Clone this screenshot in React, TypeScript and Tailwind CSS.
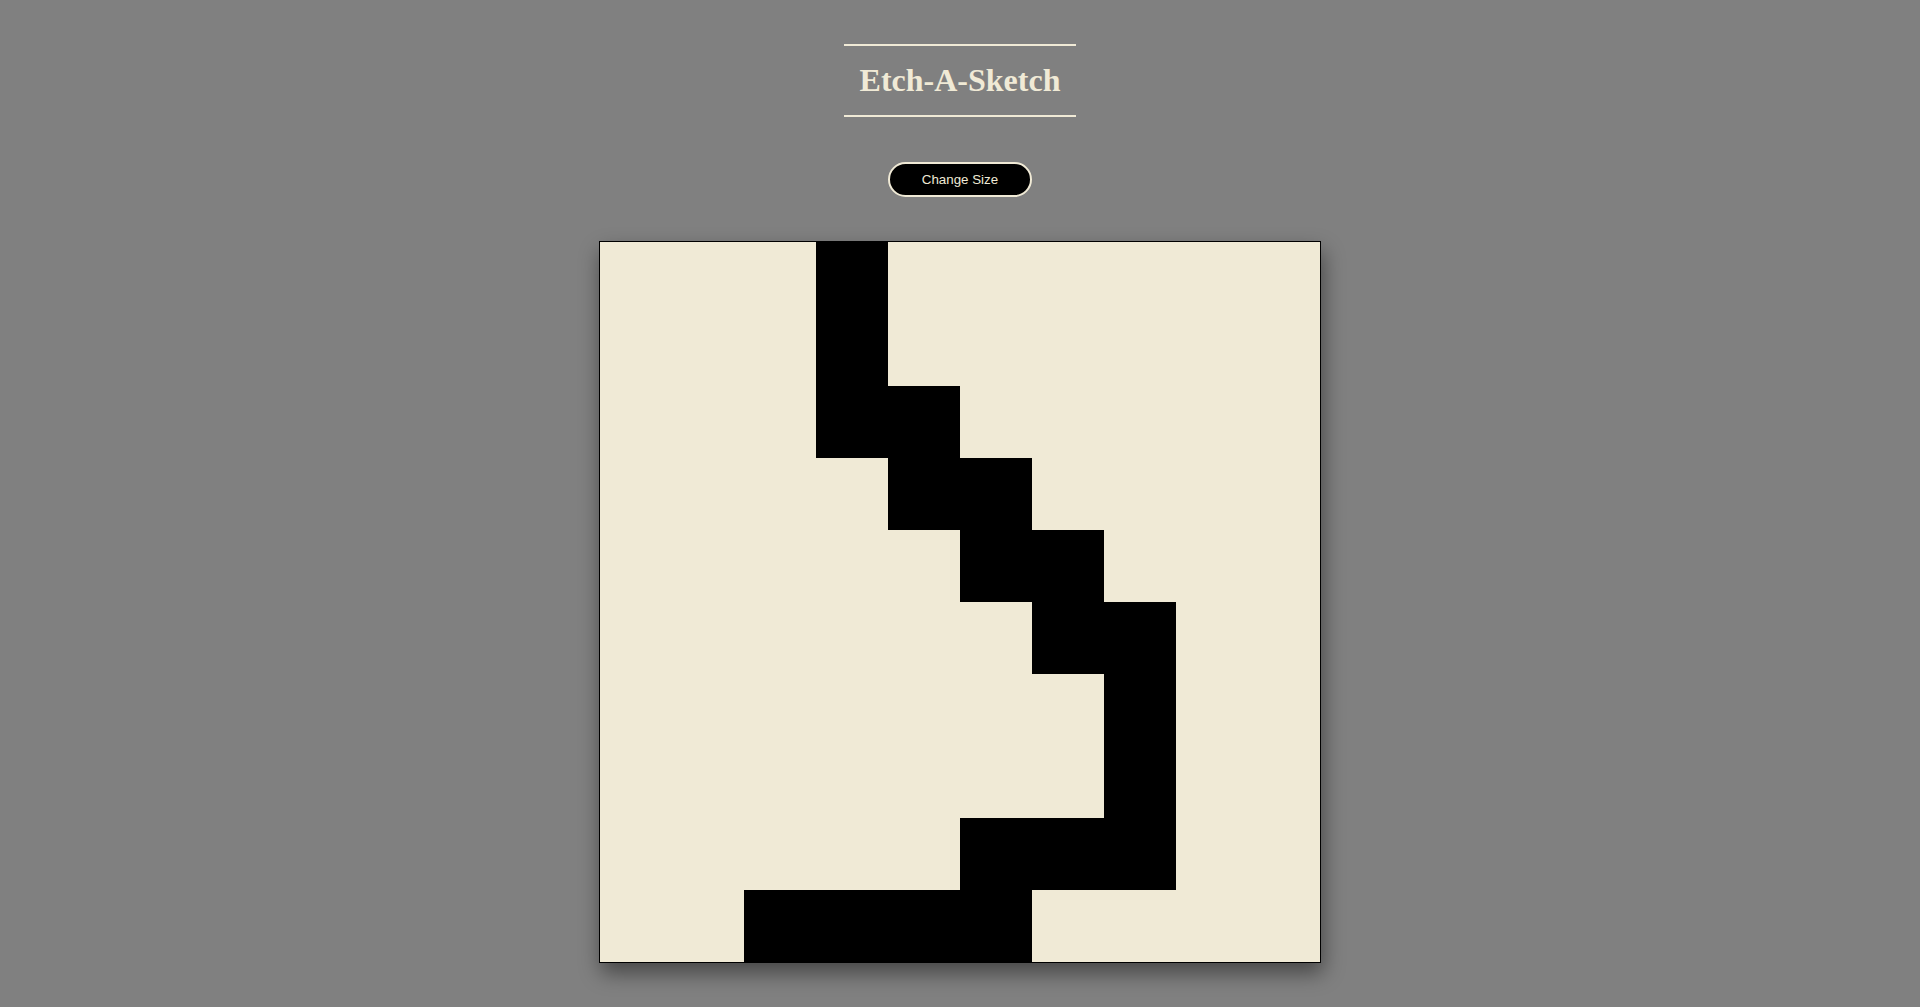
import * as React from "react";

const SIZE = 10;

// cells that have been drawn on, by row
const drawn: number[][] = [
  [3],
  [3],
  [3, 4],
  [4, 5],
  [5, 6],
  [6, 7],
  [7],
  [7],
  [5, 6, 7],
  [2, 3, 4, 5],
];

export default function App() {
  const cells = [];
  for (let r = 0; r < SIZE; r++) {
    for (let c = 0; c < SIZE; c++) {
      const on = drawn[r].includes(c);
      cells.push(
        <div key={`${r}-${c}`} className={on ? "bg-black" : "bg-[#f0ead6]"} />
      );
    }
  }

  return (
    <div className="flex min-h-[1007px] flex-col items-center bg-[#808080] font-['Liberation_Sans',Arial,sans-serif]">
      <h1 className="mt-[44px] border-y-2 border-[#f0ead6] px-4 py-4 font-['Liberation_Serif','Times_New_Roman',serif] text-[32px] leading-[37px] font-bold text-[#f0ead6]">
        Etch-A-Sketch
      </h1>

      <button className="mt-[45px] rounded-[18px] border-2 border-[#f0ead6] bg-black px-8 py-2 text-[13.33px] leading-[15px] text-[#f0ead6]">
        Change Size
      </button>

      <div className="mt-[44px] grid h-[722px] w-[722px] grid-cols-10 grid-rows-10 border border-black shadow-[2px_10px_20px_rgba(0,0,0,0.45)]">
        {cells}
      </div>
    </div>
  );
}
